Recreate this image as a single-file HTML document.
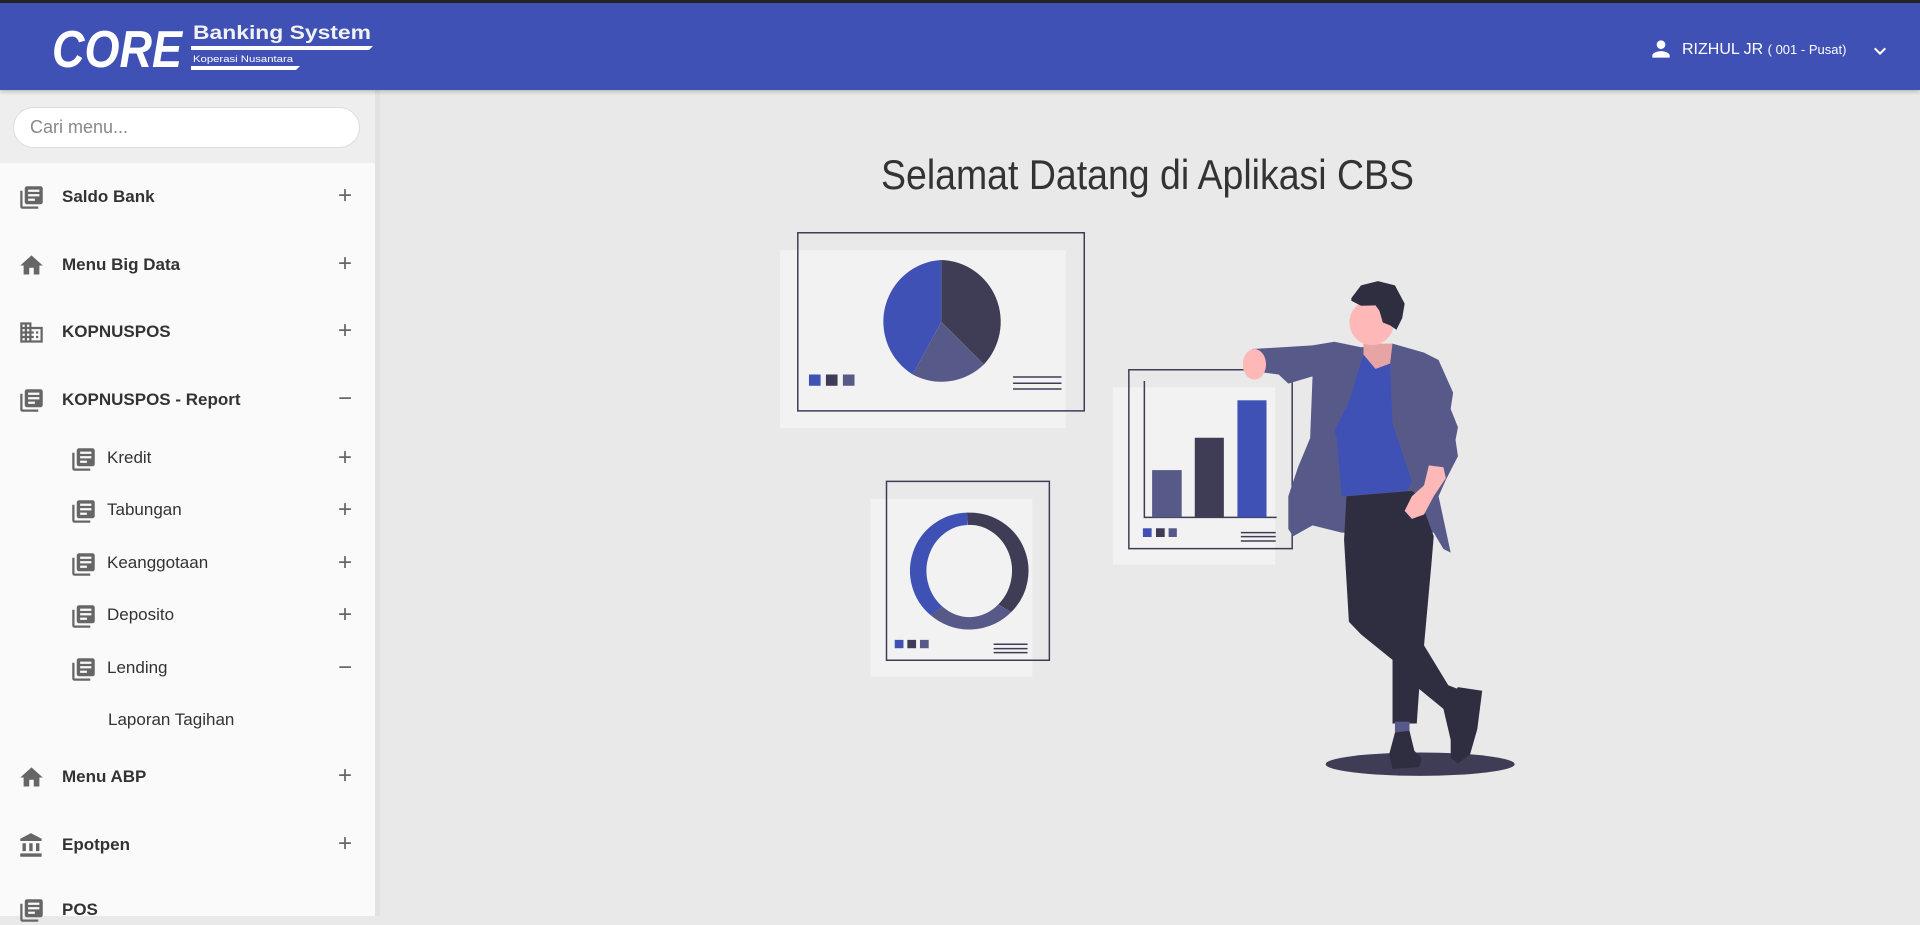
<!DOCTYPE html>
<html><head><meta charset="utf-8"><style>
*{margin:0;padding:0;box-sizing:border-box}
body{width:1920px;height:916px;overflow:hidden;background:#e9e9e9;font-family:"Liberation Sans",sans-serif;position:relative}
.top{position:absolute;left:0;top:0;width:1920px;height:90px;background:#3f51b5;border-top:3px solid #222;box-shadow:0 2px 4px rgba(0,0,0,.2);z-index:2}
.side{position:absolute;left:0;top:90px;width:380px;height:826px;background:#fafafa;border-right:5px solid #e2e2e2}
.search{position:absolute;left:0;top:0;width:375px;height:73px;background:#eeeeee}
.search div{position:absolute;left:13px;top:17px;width:347px;height:41px;border-radius:21px;background:#fff;border:1px solid #ddd;color:#888;font-size:18px;line-height:39px;padding-left:16px}
.it{position:absolute;left:0;width:371px;height:30px}
.it svg{position:absolute;top:2px;width:27px;height:27px;fill:#666}
.it span{position:absolute;top:5px;font-size:17px;color:#333}
.it b{position:absolute;top:5px;font-size:17px;color:#333}
.it i{position:absolute;left:338px;top:0;font-style:normal;font-size:24px;color:#666;line-height:28px}
.ns{vector-effect:non-scaling-stroke}
</style></head><body>
<div class="top">
 <svg style="position:absolute;left:0;top:0" width="400" height="87">
  <text x="52" y="64" font-family="Liberation Sans" font-weight="bold" font-style="italic" font-size="52" fill="#fff" textLength="130" lengthAdjust="spacingAndGlyphs">CORE</text>
  <text x="193" y="36" font-family="Liberation Sans" font-weight="bold" font-size="19" fill="#f2f2f2" textLength="178" lengthAdjust="spacingAndGlyphs">Banking System</text>
  <path d="M191 43H373L369 47H191Z" fill="#fff"/>
  <text x="193" y="59" font-family="Liberation Sans" font-size="9" fill="#fff" textLength="100" lengthAdjust="spacingAndGlyphs">Koperasi Nusantara</text>
  <path d="M191 63H300L296 67H191Z" fill="#fff"/>
 </svg>
 <svg style="position:absolute;left:1648px;top:33px" width="26" height="26" viewBox="0 0 24 24" fill="#fff"><path d="M12 12c2.21 0 4-1.790 4-4s-1.79-4-4-4-4 1.79-4 4 1.79 4 4 4zm0 2c-2.670 0-8 1.34-8 4v2h16v-2c0-2.66-5.33-4-8-4z"/></svg>
 <div style="position:absolute;left:1682px;top:38px;color:#fff;font-size:16px">RIZHUL JR <span style="font-size:13px">( 001 - Pusat)</span></div>
 <svg style="position:absolute;left:1868px;top:36px" width="24" height="24" viewBox="0 0 24 24" fill="#fff"><path d="M7.41 8.59L12 13.17l4.59-4.58L18 10l-6 6-6-6 1.41-1.41z"/></svg>
</div>
<div class="side">
 <div class="search"><div>Cari menu...</div></div>
</div>
<svg style="position:absolute;left:700px;top:140px" width="800" height="80"><text x="181" y="49" font-family="Liberation Sans" font-size="42" fill="#333" textLength="533" lengthAdjust="spacingAndGlyphs">Selamat Datang di Aplikasi CBS</text></svg>
<svg style="position:absolute;left:760px;top:220px" width="760" height="570" viewBox="0 0 1568 1568" preserveAspectRatio="none">
 <rect x="41" y="83" width="590" height="489" fill="#f2f2f2"/>
 <rect class="ns" x="78" y="35" width="591" height="490" fill="none" stroke="#3f3d56" stroke-width="1.5"/>
 <path d="M374 280 L374 110 A126 170 0 0 0 315 425 Z" fill="#3f51b5"/>
 <path d="M374 280 L374 110 A126 170 0 0 1 462 397 Z" fill="#3f3d56"/>
 <path d="M374 280 L462 397 A126 170 0 0 1 315 425 Z" fill="#575a89"/>
 <rect x="101" y="425" width="24" height="31" fill="#3f51b5"/><rect x="136" y="425" width="24" height="31" fill="#3f3d56"/><rect x="171" y="425" width="24" height="31" fill="#575a89"/>
 <path class="ns" d="M522 432H622M522 449H622M522 465H622" stroke="#3f3d56" stroke-width="1.5"/>
 <rect x="728" y="460" width="335" height="488" fill="#f2f2f2"/>
 <rect class="ns" x="761" y="412" width="337" height="492" fill="none" stroke="#3f3d56" stroke-width="1.5"/>
 <path class="ns" d="M793 443V818H1066" fill="none" stroke="#3f3d56" stroke-width="1.5"/>
 <rect x="809" y="688" width="61" height="130" fill="#575a89"/><rect x="897" y="599" width="60" height="219" fill="#3f3d56"/><rect x="985" y="496" width="60" height="322" fill="#3f51b5"/>
 <rect x="790" y="848" width="18" height="24" fill="#3f51b5"/><rect x="817" y="848" width="18" height="24" fill="#3f3d56"/><rect x="843" y="848" width="17" height="24" fill="#575a89"/>
 <path class="ns" d="M992 860H1064M992 871H1064M992 883H1064" stroke="#3f3d56" stroke-width="1.5"/>
 <rect x="228" y="767" width="334" height="489" fill="#f2f2f2"/>
 <rect class="ns" x="261" y="719" width="336" height="492" fill="none" stroke="#3f3d56" stroke-width="1.5"/>
 <g fill="none" stroke-width="34">
  <path d="M428 822 A104 143 0 0 1 505 1068" stroke="#3f3d56"/>
  <path d="M505 1068 A104 143 0 0 1 364 1075" stroke="#575a89"/>
  <path d="M364 1075 A104 143 0 0 1 428 822" stroke="#3f51b5"/>
 </g>
 <rect x="278" y="1155" width="18" height="23" fill="#3f51b5"/><rect x="304" y="1155" width="18" height="23" fill="#3f3d56"/><rect x="330" y="1155" width="18" height="23" fill="#575a89"/>
 <path class="ns" d="M482 1167H552M482 1179H552M482 1190H552" stroke="#3f3d56" stroke-width="1.5"/>
 <ellipse cx="1362" cy="1497" rx="195" ry="32" fill="#3f3d56"/>
 <path d="M1015 355L1140 345L1185 335L1240 350L1305 340L1370 365L1400 385L1430 475L1425 520L1440 570L1435 605L1440 650L1415 715L1400 760L1425 915L1410 905L1390 860L1300 860L1200 860L1140 840L1100 870L1090 850L1090 760L1110 680L1135 600L1140 430L1090 450L1070 425L1040 420Z" fill="#575a89"/>
 <path d="M1245 340L1305 340L1300 395L1270 410L1245 375Z" fill="#e6a4a4"/>
 <path d="M1245 370L1270 410L1300 395L1305 560L1345 720L1335 745L1200 760L1190 600L1185 580L1215 500Z" fill="#3f51b5"/>
 <path d="M1210 760L1345 745L1360 760L1390 870L1385 950L1370 1170L1420 1280L1440 1290L1440 1320L1410 1345L1360 1290L1355 1385L1305 1385L1305 1210L1240 1140L1215 1105L1205 880Z" fill="#2f2e41"/>
 <path d="M1310 1380H1340V1412H1310Z M1410 1345L1440 1290L1445 1340Z" fill="#575a89"/>
 <path d="M1440 1285L1490 1295L1480 1400L1465 1470L1440 1495L1425 1480L1425 1430L1410 1345Z" fill="#2f2e41"/>
 <path d="M1310 1410L1340 1405L1350 1460L1365 1480L1360 1505L1305 1510L1298 1470Z" fill="#2f2e41"/>
 <ellipse cx="1020" cy="397" rx="24" ry="42" fill="#ffb8b8"/>
 <path d="M1380 675L1410 680L1415 710L1390 760L1370 810L1345 822L1330 800L1345 760L1370 730Z" fill="#ffb8b8"/>
 <ellipse cx="1262" cy="282" rx="46" ry="62" fill="#ffb8b8"/>
 <path d="M1220 215L1240 180L1275 168L1310 180L1330 230L1325 270L1313 302L1300 290L1285 282L1278 250L1270 235L1240 236L1220 222Z" fill="#2f2e41"/>
</svg>
<div style="position:absolute;left:0;top:0">
 <div class="it" style="top:182px"><svg style="left:18px" viewBox="0 0 24 24"><path d="M4 6H2v14c0 1.1.9 2 2 2h14v-2H4V6zm16-4H8c-1.1 0-2 .9-2 2v12c0 1.1.9 2 2 2h12c1.1 0 2-.9 2-2V4c0-1.1-.9-2-2-2zm-1 9H9V9h10v2zm-4 4H9v-2h6v2zm4-8H9V5h10v2z"/></svg><b style="left:62px">Saldo Bank</b><i>+</i></div>
 <div class="it" style="top:250px"><svg style="left:18px" viewBox="0 0 24 24"><path d="M10 20v-6h4v6h5v-8h3L12 3 2 12h3v8z"/></svg><b style="left:62px">Menu Big Data</b><i>+</i></div>
 <div class="it" style="top:317px"><svg style="left:18px" viewBox="0 0 24 24"><path d="M12 7V3H2v18h20V7H12zM6 19H4v-2h2v2zm0-4H4v-2h2v2zm0-4H4V9h2v2zm0-4H4V5h2v2zm4 12H8v-2h2v2zm0-4H8v-2h2v2zm0-4H8V9h2v2zm0-4H8V5h2v2zm10 12h-8v-2h2v-2h-2v-2h2v-2h-2V9h8v10zm-2-8h-2v2h2v-2zm0 4h-2v2h2v-2z"/></svg><b style="left:62px">KOPNUSPOS</b><i>+</i></div>
 <div class="it" style="top:385px"><svg style="left:18px" viewBox="0 0 24 24"><path d="M4 6H2v14c0 1.1.9 2 2 2h14v-2H4V6zm16-4H8c-1.1 0-2 .9-2 2v12c0 1.1.9 2 2 2h12c1.1 0 2-.9 2-2V4c0-1.1-.9-2-2-2zm-1 9H9V9h10v2zm-4 4H9v-2h6v2zm4-8H9V5h10v2z"/></svg><b style="left:62px">KOPNUSPOS - Report</b><i>−</i></div>
 <div class="it" style="top:444px"><svg style="left:70px" viewBox="0 0 24 24"><path d="M4 6H2v14c0 1.1.9 2 2 2h14v-2H4V6zm16-4H8c-1.1 0-2 .9-2 2v12c0 1.1.9 2 2 2h12c1.1 0 2-.9 2-2V4c0-1.1-.9-2-2-2zm-1 9H9V9h10v2zm-4 4H9v-2h6v2zm4-8H9V5h10v2z"/></svg><span style="left:107px;top:4px">Kredit</span><i>+</i></div>
 <div class="it" style="top:496px"><svg style="left:70px" viewBox="0 0 24 24"><path d="M4 6H2v14c0 1.1.9 2 2 2h14v-2H4V6zm16-4H8c-1.1 0-2 .9-2 2v12c0 1.1.9 2 2 2h12c1.1 0 2-.9 2-2V4c0-1.1-.9-2-2-2zm-1 9H9V9h10v2zm-4 4H9v-2h6v2zm4-8H9V5h10v2z"/></svg><span style="left:107px;top:4px">Tabungan</span><i>+</i></div>
 <div class="it" style="top:549px"><svg style="left:70px" viewBox="0 0 24 24"><path d="M4 6H2v14c0 1.1.9 2 2 2h14v-2H4V6zm16-4H8c-1.1 0-2 .9-2 2v12c0 1.1.9 2 2 2h12c1.1 0 2-.9 2-2V4c0-1.1-.9-2-2-2zm-1 9H9V9h10v2zm-4 4H9v-2h6v2zm4-8H9V5h10v2z"/></svg><span style="left:107px;top:4px">Keanggotaan</span><i>+</i></div>
 <div class="it" style="top:601px"><svg style="left:70px" viewBox="0 0 24 24"><path d="M4 6H2v14c0 1.1.9 2 2 2h14v-2H4V6zm16-4H8c-1.1 0-2 .9-2 2v12c0 1.1.9 2 2 2h12c1.1 0 2-.9 2-2V4c0-1.1-.9-2-2-2zm-1 9H9V9h10v2zm-4 4H9v-2h6v2zm4-8H9V5h10v2z"/></svg><span style="left:107px;top:4px">Deposito</span><i>+</i></div>
 <div class="it" style="top:654px"><svg style="left:70px" viewBox="0 0 24 24"><path d="M4 6H2v14c0 1.1.9 2 2 2h14v-2H4V6zm16-4H8c-1.1 0-2 .9-2 2v12c0 1.1.9 2 2 2h12c1.1 0 2-.9 2-2V4c0-1.1-.9-2-2-2zm-1 9H9V9h10v2zm-4 4H9v-2h6v2zm4-8H9V5h10v2z"/></svg><span style="left:107px;top:4px">Lending</span><i>−</i></div>
 <div class="it" style="top:706px"><span style="left:108px;top:4px">Laporan Tagihan</span></div>
 <div class="it" style="top:762px"><svg style="left:18px" viewBox="0 0 24 24"><path d="M10 20v-6h4v6h5v-8h3L12 3 2 12h3v8z"/></svg><b style="left:62px">Menu ABP</b><i>+</i></div>
 <div class="it" style="top:830px"><svg style="left:18px" viewBox="0 0 24 24"><path d="M4 10v7h3v-7H4zm6 0v7h3v-7h-3zM2 22h19v-3H2v3zm14-12v7h3v-7h-3zm-4.5-9L2 6v2h19V6l-9.5-5z"/></svg><b style="left:62px">Epotpen</b><i>+</i></div>
 <div class="it" style="top:895px"><svg style="left:18px" viewBox="0 0 24 24"><path d="M4 6H2v14c0 1.1.9 2 2 2h14v-2H4V6zm16-4H8c-1.1 0-2 .9-2 2v12c0 1.1.9 2 2 2h12c1.1 0 2-.9 2-2V4c0-1.1-.9-2-2-2zm-1 9H9V9h10v2zm-4 4H9v-2h6v2zm4-8H9V5h10v2z"/></svg><b style="left:62px">POS</b></div>
</div>
</body></html>
